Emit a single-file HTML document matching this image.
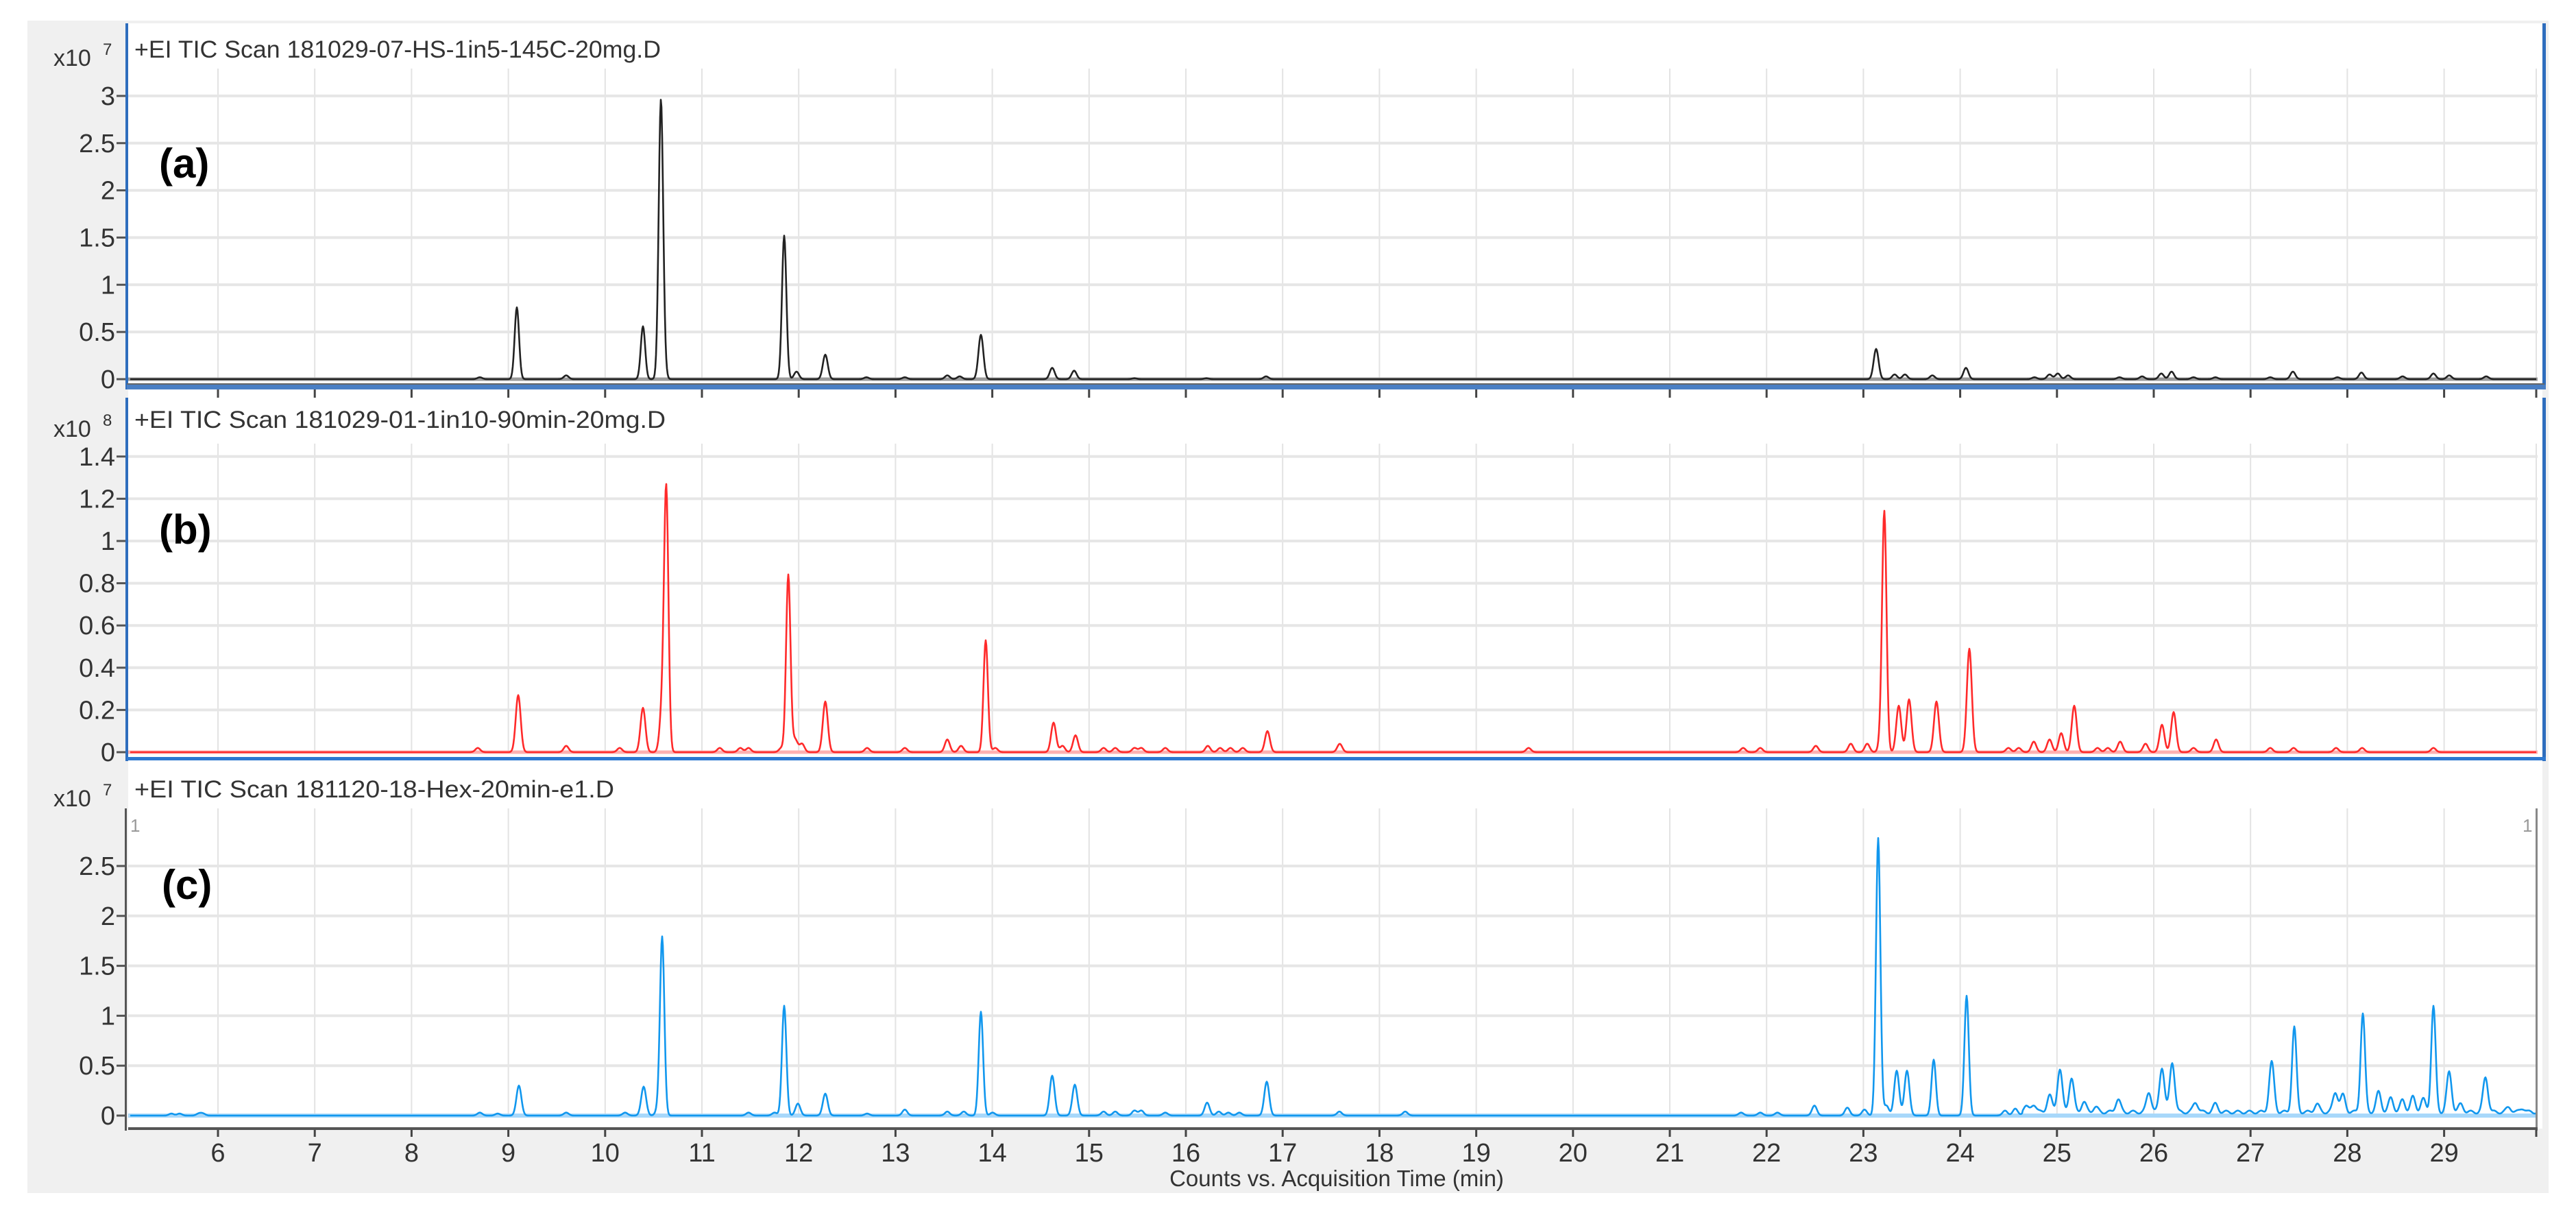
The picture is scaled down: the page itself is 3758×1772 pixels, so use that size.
<!DOCTYPE html>
<html><head><meta charset="utf-8">
<style>
html,body{margin:0;padding:0;background:#fff;}
svg{display:block;}
text{font-family:"Liberation Sans",Arial,sans-serif;}
</style></head>
<body>
<svg id="s" xmlns="http://www.w3.org/2000/svg" width="3758" height="1772" viewBox="0 0 3758 1772">
<rect x="0" y="0" width="3758" height="1772" fill="#ffffff"/>
<rect x="40" y="30" width="3678" height="1710" fill="#f0f0f0"/>
<rect x="187" y="34" width="3522" height="1612" fill="#ffffff"/>
<g id="grid"></g>
<g id="traces"></g>
<g id="axes"></g>
<g fill="#333" font-size="36">
  <text x="196" y="84" font-size="35" textLength="768" lengthAdjust="spacingAndGlyphs">+EI TIC Scan 181029-07-HS-1in5-145C-20mg.D</text>
  <text x="196" y="624" font-size="35" textLength="775" lengthAdjust="spacingAndGlyphs">+EI TIC Scan 181029-01-1in10-90min-20mg.D</text>
  <text x="196" y="1163" font-size="35" textLength="700" lengthAdjust="spacingAndGlyphs">+EI TIC Scan 181120-18-Hex-20min-e1.D</text>
  <text x="78" y="96" font-size="34">x10</text><text x="150" y="80" font-size="24">7</text>
  <text x="78" y="637" font-size="34">x10</text><text x="150" y="621" font-size="24">8</text>
  <text x="78" y="1176" font-size="34">x10</text><text x="150" y="1160" font-size="24">7</text>
</g>
<g font-weight="bold" font-size="60" fill="#000">
  <text x="232" y="259">(a)</text>
  <text x="232" y="793">(b)</text>
  <text x="236" y="1311">(c)</text>
</g>
<text x="190" y="1213" font-size="26" fill="#999">1</text>
<text x="3680" y="1213" font-size="26" fill="#999">1</text>
<text x="1950" y="1730" font-size="33" fill="#333" text-anchor="middle">Counts vs. Acquisition Time (min)</text>
<g id="labels" fill="#333" font-size="38"></g>
</svg>
<script>
var NS="http://www.w3.org/2000/svg";
function el(parent,tag,attrs,txt){var e=document.createElementNS(NS,tag);for(var k in attrs)e.setAttribute(k,attrs[k]);if(txt!==undefined)e.textContent=txt;document.getElementById(parent).appendChild(e);return e;}
function X(t){return 318+(t-6)*141.2;}
var panels=[
 {top:100,y0:553,ppu:137.7,vals:[0,0.5,1,1.5,2,2.5,3]},
 {top:647,y0:1097,ppu:308,vals:[0,0.2,0.4,0.6,0.8,1,1.2,1.4]},
 {top:1179,y0:1627,ppu:145.6,vals:[0,0.5,1,1.5,2,2.5]}
];
panels.forEach(function(p){
  for(var t=6;t<=30;t++){var x=X(t);if(x>3702)x=3700;el("grid","line",{x1:x,y1:p.top,x2:x,y2:p.y0,stroke:"#e3e3e3","stroke-width":2});}
  p.vals.forEach(function(v){var y=p.y0-v*p.ppu;if(v>0)el("grid","line",{x1:187,y1:y,x2:3702,y2:y,stroke:"#e6e6e6","stroke-width":4});
    el("labels","text",{x:168,y:y+13,"text-anchor":"end"},String(v));
    el("axes","line",{x1:170,y1:y,x2:185,y2:y,stroke:"#555","stroke-width":3});});
});
var A=[[700,.02],[754,.76],[826,.04],[938,.56],[964,2.6],[966,.42],[1144,1.52],[1162,.08],[1204,.26],[1264,.02],[1320,.02],[1382,.04],[1400,.03],[1431,.47],[1535,.12],[1567,.09],[1655,.01],[1760,.01],[1847,.03],
 [2737,.32],[2764,.05],[2779,.05],[2819,.04],[2868,.12],[2968,.02],[2990,.05],[3002,.06],[3017,.04],[3092,.02],[3125,.03],[3153,.06],[3168,.08],[3200,.02],[3232,.02],[3312,.02],[3345,.08],[3410,.02],[3445,.07],[3505,.03],[3550,.06],[3573,.04],[3627,.03]];
var B=[[697,.02],[756,.27],[826,.03],[904,.02],[938,.21],[966,.2],[972,1.22],[1050,.02],[1080,.02],[1092,.02],[1140,.02],[1150,.84],[1160,.06],[1170,.04],[1204,.24],[1265,.02],[1320,.02],[1382,.06],[1402,.03],[1438,.53],[1452,.02],[1537,.14],[1550,.03],[1569,.08],[1610,.02],[1627,.02],[1655,.02],[1665,.02],[1700,.02],[1762,.03],[1780,.02],[1795,.02],[1813,.02],[1849,.1],[1955,.02],
 [1954,.02],[2230,.02],[2543,.02],[2568,.02],[2649,.03],[2700,.04],[2724,.04],[2749,1.1],[2745,.08],[2770,.22],[2785,.25],[2825,.24],[2873,.49],[2930,.02],[2945,.02],[2967,.05],[2990,.06],[3007,.09],[3026,.22],[3060,.02],[3075,.02],[3093,.05],[3130,.04],[3154,.13],[3171,.19],[3200,.02],[3233,.06],[3312,.02],[3346,.02],[3408,.02],[3446,.02],[3550,.02]];
var C=[[250,.02],[262,.02],[290,.02],[296,.02],[700,.03],[726,.02],[757,.3],[826,.03],[912,.03],[939,.29],[966,1.78],[960,.06],[1092,.03],[1130,.03],[1144,1.1],[1164,.12],[1204,.22],[1265,.02],[1320,.06],[1382,.04],[1406,.04],[1431,1.04],[1448,.03],[1535,.4],[1568,.31],[1610,.04],[1627,.04],[1655,.05],[1665,.05],[1700,.03],[1761,.13],[1778,.04],[1792,.03],[1808,.03],[1848,.34],[1954,.04],
 [2050,.04],[2540,.03],[2568,.03],[2593,.03],[2647,.1],[2695,.08],[2720,.06],[2740,2.78],[2752,.1],[2767,.45],[2782,.45],[2821,.56],[2869,1.2],[2925,.05],[2940,.07],[2955,.06],[2967,.08],[2990,.17],[3005,.43],[3022,.34],[3040,.1],[3057,.05],[3090,.13],[3135,.2],[3154,.45],[3169,.5],[3203,.1],[3232,.08],[3314,.5],[3347,.85],[3380,.08],[3407,.2],[3418,.17],[3447,.99],[3470,.2],[3488,.14],[3505,.12],[3520,.15],[3535,.13],[3550,1.06],[3573,.4],[3590,.08],[3626,.35],[3660,.05],[3680,.04]];
function trace(peaks,p,color,sw,noise){
  var d="",xs=190,xe=3700;
  for(var x=xs;x<=xe;x+=1){
    var h=0;
    for(var i=0;i<peaks.length;i++){var dx=x-peaks[i][0];var s=peaks[i][1]>0.5?3.2:3.6;if(Math.abs(dx)<20)h+=peaks[i][1]*Math.exp(-dx*dx/(2*s*s));}
    if(noise&&x>2950)h+=0.035+0.015*Math.sin(x*0.37);
    var y=p.y0-h*p.ppu;
    d+=(x===xs?"M":"L")+x+" "+y.toFixed(1);
  }
  el("traces","path",{d:d,fill:"none",stroke:color,"stroke-width":sw,"stroke-linejoin":"round"});
}
el("traces","line",{x1:187,y1:553,x2:3702,y2:553,stroke:"#9a9a9a","stroke-width":5});
el("traces","line",{x1:187,y1:1097,x2:3702,y2:1097,stroke:"#ffb0b0","stroke-width":5});
el("traces","line",{x1:187,y1:1627,x2:3702,y2:1627,stroke:"#a8d8fa","stroke-width":6});
trace(A,panels[0],"#222",2.6,false);
trace(B,panels[1],"#ff2a2a",2.6,false);
trace(C,panels[2],"#1197ee",2.6,true);
el("axes","rect",{x:183,y:34,width:4,height:534,fill:"#2e6dbd"});
el("axes","rect",{x:3709,y:34,width:5,height:534,fill:"#2e6dbd"});
el("axes","rect",{x:185,y:561,width:3529,height:7,fill:"#4a7fc4"});
el("axes","line",{x1:185,y1:560,x2:3712,y2:560,stroke:"#666","stroke-width":2});
el("axes","rect",{x:183,y:580,width:4,height:530,fill:"#2e6dbd"});
el("axes","rect",{x:3709,y:580,width:5,height:530,fill:"#2e6dbd"});
el("axes","rect",{x:185,y:1104,width:3529,height:5,fill:"#2e78d0"});
el("axes","rect",{x:182,y:1179,width:3,height:470,fill:"#555"});
el("axes","rect",{x:3699,y:1179,width:3,height:470,fill:"#888"});
el("axes","rect",{x:187,y:1644,width:3515,height:4,fill:"#555"});
for(var t=6;t<=30;t++){var x=X(t);if(x>3702)x=3700;
  el("axes","line",{x1:x,y1:568,x2:x,y2:580,stroke:"#444","stroke-width":3});
  el("axes","line",{x1:x,y1:1648,x2:x,y2:1658,stroke:"#444","stroke-width":3});
  if(t<30)el("labels","text",{x:x,y:1694,"text-anchor":"middle"},String(t));
}
</script>
</body></html>
